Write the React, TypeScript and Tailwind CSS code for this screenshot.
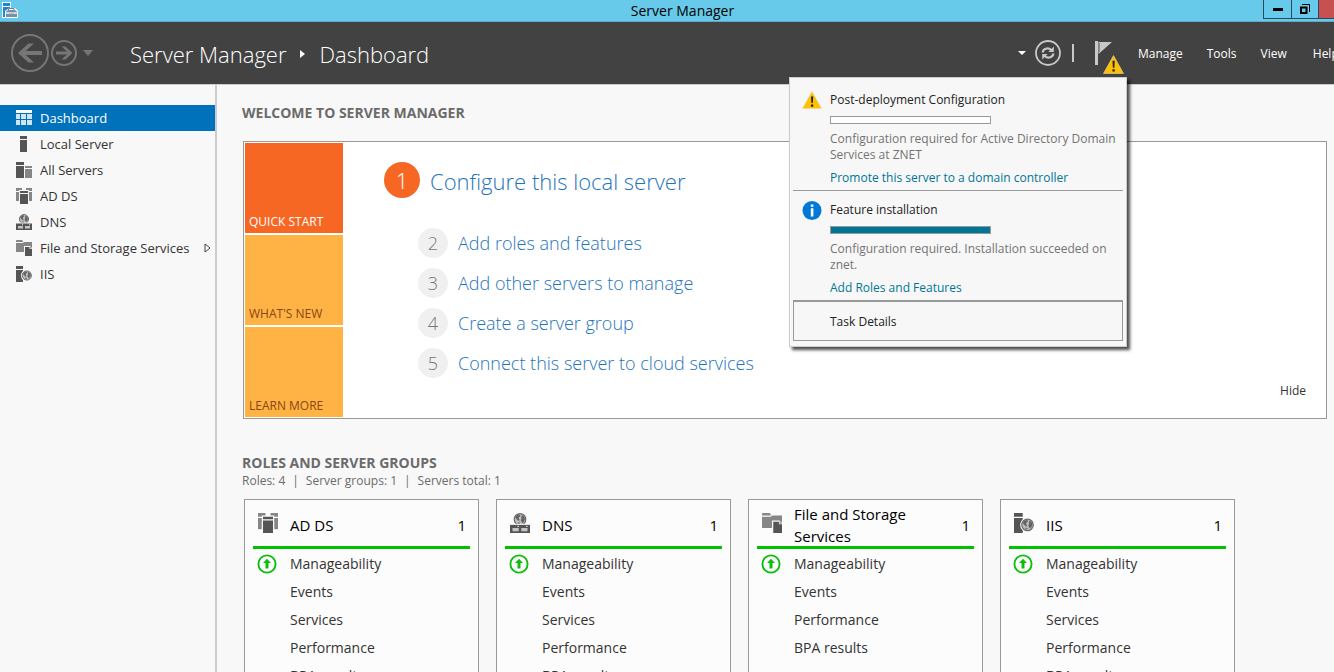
import React, { useState } from 'react';

type IconName = 'dashboard' | 'local' | 'all' | 'adds' | 'dns' | 'files' | 'iis';

const NAV: { label: string; icon: IconName; expandable?: boolean }[] = [
  { label: 'Dashboard', icon: 'dashboard' },
  { label: 'Local Server', icon: 'local' },
  { label: 'All Servers', icon: 'all' },
  { label: 'AD DS', icon: 'adds' },
  { label: 'DNS', icon: 'dns' },
  { label: 'File and Storage Services', icon: 'files', expandable: true },
  { label: 'IIS', icon: 'iis' },
];

const STEPS = [
  'Add roles and features',
  'Add other servers to manage',
  'Create a server group',
  'Connect this server to cloud services',
];

const ROLES: { name: string; icon: IconName; count: number; rows: string[] }[] = [
  { name: 'AD DS', icon: 'adds', count: 1, rows: ['Events', 'Services', 'Performance', 'BPA results'] },
  { name: 'DNS', icon: 'dns', count: 1, rows: ['Events', 'Services', 'Performance', 'BPA results'] },
  { name: 'File and Storage Services', icon: 'files', count: 1, rows: ['Events', 'Performance', 'BPA results'] },
  { name: 'IIS', icon: 'iis', count: 1, rows: ['Events', 'Services', 'Performance', 'BPA results'] },
];

function Globe({ cx, cy }: { cx: number; cy: number }) {
  return (
    <g transform={`translate(${cx} ${cy})`}>
      <circle r="5.9" fill="#f8f8f8" />
      <circle r="4.6" fill="#bcbcbc" stroke="#6e6e6e" strokeWidth="1" />
      <path d="M-3.8-1.8-2.2-3.6-.2-3.9.4-2.8-.8-2-1.2-.6-.2.2-.8 1.2-2 .4-3-.6Z" fill="#626262" />
      <path d="M1.6-3.4 3.2-2.4 4-.4 3.2 1.6 2 3 1.2 1.6.6.4 1.4-.8 1-2Z" fill="#626262" />
      <path d="M-1.6 2 .2 2.6-.4 3.9-1.8 3.4Z" fill="#777" />
    </g>
  );
}

function RoleIcon({ name, className }: { name: IconName; className: string }) {
  return (
    <svg viewBox="0 0 16 16" className={className} aria-hidden="true">
      {name === 'dashboard' && (
        <>
          <path d="M0 0h16v3H0z" fill="#fff" />
          <path d="M0 4h4v5H0zM0 10h4v5H0zM5 4h5v5H5zM11 4h5v5h-5zM5 10h5v5H5zM11 10h5v5h-5z" fill="#cfe5f5" />
        </>
      )}
      {name === 'local' && <path d="M4 0h7v3H4zM4 4h7v12H4z" fill="#555" />}
      {name === 'all' && (
        <>
          <path d="M0 0h8v3H0zM0 4h8v12H0z" fill="#555" />
          <path d="M9 4h7v2H9zM9 7h7v9H9z" fill="#868686" />
        </>
      )}
      {name === 'adds' && (
        <>
          <path d="M0 0h6v2H3v1H0zM0 4h3v9H0zM10 0h6v3h-3V2h-3zM13 4h3v9h-3z" fill="#868686" />
          <path d="M4 3h8v2H4zM4 6h8v10H4z" fill="#555" />
        </>
      )}
      {name === 'dns' && (
        <>
          <Globe cx={8} cy={5.1} />
          <path d="M0 8.6h16V16H0z" fill="#f8f8f8" />
          <path d="M0 9.5h16V16H0z" fill="#555" />
          <path d="M2 12h5v2.5H2zM9 12h5v2.5H9z" fill="#c4c4c4" />
          <path d="M6 10.2h1v1H6zM13 10.2h1v1h-1z" fill="#eee" />
        </>
      )}
      {name === 'files' && (
        <>
          <path d="M0 .5.5 0H6l1 1v1H0zM0 3h7l1-1h8v10H0z" fill="#868686" />
          <path d="M8 6h6l2.5 2.5V16H8z" fill="#f8f8f8" />
          <path d="M9 7h4.5v2H16v7H9z" fill="#555" />
          <path d="M14 6.5 16 8.5h-2z" fill="#868686" />
        </>
      )}
      {name === 'iis' && (
        <>
          <path d="M0 0h7v3H0zM0 4h7v12H0z" fill="#555" />
          <Globe cx={10.8} cy={9.5} />
        </>
      )}
    </svg>
  );
}

function WarningIcon({ className }: { className: string }) {
  return (
    <svg viewBox="0 0 20 18" className={className} aria-hidden="true">
      <path d="M10 .5 19.5 17.5H.5Z" fill="#ffc000" stroke="#e9d9a0" strokeWidth=".6" strokeLinejoin="round" />
      <path d="M9 5.5h2.2l-.4 6.500H9.4zM9 13.5h2.2v2.2H9z" fill="#222" />
    </svg>
  );
}

function UpIcon() {
  return (
    <svg viewBox="0 0 20 20" className="size-5" aria-hidden="true">
      <circle cx="10" cy="10" r="8.6" fill="#fff" stroke="#0abf0a" strokeWidth="1.9" />
      <path d="M10 4.8 14 9h-2.5v5.5h-3V9H6z" fill="#0abf0a" />
    </svg>
  );
}

function TitleBar() {
  return (
    <div className="flex h-[22px] shrink-0 items-start border-b border-[#5fa9c6] bg-[#67caea]">
      <div className="flex flex-1 items-center pl-0.5 pt-0.5">
        <svg viewBox="0 0 16 16" className="size-4" aria-hidden="true">
          <path d="M0 0h9v6h4l3 3v7H0z" fill="#fff" />
          <path d="M1 1h7v3H1zM1 5h7v1L5 7.500 3 9v6H1z" fill="#1c86d1" />
          <path d="M9 6H6.5v1.5h6V6z" fill="#fff" />
          <path d="M4 9.5 6 8h7l2 1.5V15H4z" fill="#7591a6" />
          <path d="M6.5 8V6.5h5.5V8" fill="none" stroke="#6a8598" />
          <path d="M4 11h11" stroke="#fff" />
          <path d="M6 10.5v1.5M13 10.5v1.5" stroke="#fff" />
        </svg>
      </div>
      <h1 className="text-[14px] leading-[21px] text-black">Server Manager</h1>
      <div className="flex flex-1 justify-end pr-[3px]">
        <button aria-label="Minimize" className="flex h-[19px] w-[29px] items-center justify-center border border-t-0 border-[#2b4a57]">
          <span className="h-[3px] w-[10px] bg-black" />
        </button>
        <button aria-label="Restore" className="flex h-[19px] w-[26px] items-center justify-center border-b border-[#2b4a57]">
          <svg viewBox="0 0 10 10" className="size-[10px]" aria-hidden="true">
            <path d="M2 .5h7.5V8" fill="none" stroke="#000" />
            <path d="M1 3.5h5.5V9H1z" fill="none" stroke="#000" strokeWidth="2" />
          </svg>
        </button>
        <button aria-label="Close" className="h-[19px] w-[45px] border border-t-0 border-[#2b4a57] bg-[#c75050]" />
      </div>
    </div>
  );
}

function Task({ icon, title, progress, text, link, id }: { icon: React.ReactNode; title: string; progress: number; text: string; link: string; id: string }) {
  return (
    <div className="flex gap-2 pb-1 pl-[9px] pr-1 pt-2.5">
      <div className="w-5 shrink-0">{icon}</div>
      <div className="text-[12px] leading-4">
        <h3 id={id} className="leading-[18px] text-[#222]">{title}</h3>
        <div
          role="progressbar"
          aria-labelledby={id}
          aria-valuenow={progress}
          className="mt-[7px] h-2 w-[161px] border border-[#999] bg-white"
        >
          <div className="h-full bg-[#007696]" style={{ width: `${progress}%` }} />
        </div>
        <p className="mt-[7px] text-[#747474]">{text}</p>
        <a href="#" className="mt-[7px] block text-[#007696]">{link}</a>
      </div>
    </div>
  );
}

function Notifications() {
  return (
    <div className="absolute right-[239px] top-[55px] z-10 w-[338px] border border-[#ccc] bg-[#f7f7f7] px-[3px] pb-[5px] pt-[3px] shadow-[3px_3px_3px_rgba(0,0,0,0.7)]">
      <Task
        id="task-deploy"
        icon={<WarningIcon className="h-[18px] w-5" />}
        title="Post-deployment Configuration"
        progress={0}
        text="Configuration required for Active Directory Domain Services at ZNET"
        link="Promote this server to a domain controller"
      />
      <div className="border-t border-[#999]" />
      <Task
        id="task-feature"
        icon={
          <svg viewBox="0 0 20 20" className="size-5" aria-hidden="true">
            <circle cx="10" cy="9.5" r="9.5" fill="#0078d7" />
            <path d="M8.8 3.500h2.600v2.300H8.8zM8.8 7.300h2.600v8.200H8.8z" fill="#fff" />
          </svg>
        }
        title="Feature installation"
        progress={100}
        text="Configuration required. Installation succeeded on znet."
        link="Add Roles and Features"
      />
      <button className="block h-[41px] w-full border border-t-2 border-[#999] pl-9 pt-px text-left text-[12px] text-[#222]">Task Details</button>
    </div>
  );
}

function Header({ open, onToggle }: { open: boolean; onToggle: () => void }) {
  return (
    <header className="relative flex h-[63px] shrink-0 items-center border-b border-[#ccc] bg-[#424242] pl-2.5 text-white">
      <button aria-label="Back" className="size-10">
        <svg viewBox="0 0 40 40" className="size-10" fill="none" stroke="#767676" aria-hidden="true">
          <circle cx="20" cy="20" r="18" strokeWidth="2" />
          <path d="M32 20H12" strokeWidth="4" />
          <path d="M24 10.5h-5.5L8 20l10.5 9.500H24L13.5 20Z" fill="#767676" stroke="none" />
        </svg>
      </button>
      <button aria-label="Forward" className="size-7">
        <svg viewBox="0 0 28 28" className="size-7" fill="none" stroke="#767676" aria-hidden="true">
          <circle cx="14" cy="14" r="12" strokeWidth="2" />
          <path d="M6 14h13" strokeWidth="3" />
          <path d="M11.5 7.5h4L22.5 14l-7 6.500h-4L18.5 14Z" fill="#767676" stroke="none" />
        </svg>
      </button>
      <button aria-label="History" className="flex w-5 justify-center">
        <svg viewBox="0 0 10 6" className="h-1.5 w-2.5" aria-hidden="true"><path d="M0 0h10L5 6Z" fill="#767676" /></svg>
      </button>
      <nav aria-label="Breadcrumb" className="flex items-center pl-8 pt-0.5 text-[22px] font-light leading-8">
        <a href="#">Server Manager</a>
        <svg viewBox="0 0 5 8" className="mx-3.5 h-2 w-[5px]" aria-hidden="true"><path d="M0 0 5 4 0 8Z" fill="#fff" /></svg>
        <a href="#">Dashboard</a>
      </nav>
      <div className="ml-auto flex items-center">
        <button aria-label="More" className="mr-[9px]">
          <svg viewBox="0 0 8 4" className="h-1 w-2" aria-hidden="true"><path d="M0 0h8L4 4Z" fill="#fff" /></svg>
        </button>
        <button aria-label="Refresh">
          <svg viewBox="0 0 26 26" className="size-[26px]" fill="none" stroke="#c8c8c8" aria-hidden="true">
            <circle cx="13" cy="13" r="12" strokeWidth="1.8" />
            <path d="M7.8 12.5c0-3.5 5-5.8 8.5-2.5M18.2 13.5c0 3.5-5 5.8-8.5 2.5" strokeWidth="2.2" />
            <path d="M18.8 6.5V12h-5.5ZM7.2 19.5V14h5.5Z" fill="#c8c8c8" stroke="none" />
          </svg>
        </button>
        <span className="ml-[11px] h-[18px] w-0.5 bg-[#c8c8c8]" />
        <button aria-label="Notifications" aria-expanded={open} onClick={onToggle} className="relative ml-[21px] h-7 w-[22px]">
          <svg viewBox="0 0 18 24" className="h-6 w-[18px]" aria-hidden="true">
            <path d="M0 0h3v24H0z" fill="#c8c8c8" />
            <path d="M3.5 1H17L3.5 13Z" fill="#c8c8c8" />
            <path d="M4.5 2v9" stroke="#8a8a8a" />
          </svg>
          <WarningIcon className="absolute left-2 top-4 h-[19px] w-[21px]" />
        </button>
        <nav className="ml-[21px] flex w-[228px] gap-6 whitespace-nowrap pt-0.5 text-[12px]">
          <button>Manage</button>
          <button>Tools</button>
          <button>View</button>
          <button className="pl-0.5">Help</button>
        </nav>
      </div>
      {open && <Notifications />}
    </header>
  );
}

function Sidebar({ active, onSelect }: { active: string; onSelect: (label: string) => void }) {
  return (
    <nav className="w-[217px] shrink-0 border-r-2 border-[#ccc] pt-5">
      {NAV.map((item) => (
        <button
          key={item.label}
          onClick={() => onSelect(item.label)}
          className={`flex h-[26px] w-full items-center pl-4 text-left text-[13px] ${item.label === active ? 'bg-[#0072bc] text-white' : 'text-[#333]'}`}
        >
          <RoleIcon name={item.icon} className="size-4" />
          <span className="ml-2 whitespace-nowrap pt-0.5">{item.label}</span>
          {item.expandable && (
            <svg viewBox="0 0 7 10" className="ml-auto mr-1 h-2.5 w-[7px]" aria-hidden="true">
              <path d="M1 1v8l5-4Z" fill="none" stroke="#444" />
            </svg>
          )}
        </button>
      ))}
    </nav>
  );
}

function Welcome() {
  return (
    <section>
      <h2 className="text-[14px] font-bold leading-5 text-[#6b6b6b]">WELCOME TO SERVER MANAGER</h2>
      <div className="relative ml-px mt-[18px] flex border border-[#999] bg-white p-px">
        <div className="flex w-[98px] shrink-0 flex-col gap-0.5 text-[12px]">
          <button className="flex h-[90px] items-end bg-[#f56723] px-1 pb-0.5 text-white">QUICK START</button>
          <button className="flex h-[90px] items-end bg-[#ffb344] px-1 pb-0.5 text-[#8a4513]">WHAT'S NEW</button>
          <button className="flex h-[90px] items-end bg-[#ffb344] px-1 pb-0.5 text-[#8a4513]">LEARN MORE</button>
        </div>
        <div className="pl-[41px] pt-[19px] text-[#1f74bb]">
          <a href="#" className="flex items-center gap-2.5 text-[22px] font-light">
            <span className="flex size-9 items-center justify-center rounded-full bg-[#f56723] text-white">1</span>
            <span className="pt-0.5">Configure this local server</span>
          </a>
          <ol className="mt-[30px] flex flex-col gap-2.5 pl-[34px]">
            {STEPS.map((step, i) => (
              <li key={step}>
                <a href="#" className="flex items-center gap-2.5 text-[18px] font-light">
                  <span className="flex size-[30px] items-center justify-center rounded-full bg-[#f0f0f0] text-[#777]">{i + 2}</span>
                  {step}
                </a>
              </li>
            ))}
          </ol>
        </div>
        <button className="absolute bottom-[18px] right-5 text-[12px] leading-[18px] text-[#333]">Hide</button>
      </div>
    </section>
  );
}

function RoleCard({ role }: { role: (typeof ROLES)[number] }) {
  return (
    <article className="w-[235px] shrink-0 border border-[#999] bg-[#fcfcfc] px-2 pb-4">
      <div className="flex h-[49px] items-center border-b-3 border-[#00c000] pl-[5px] pr-1 text-[15px] leading-[22px] text-black">
        <RoleIcon name={role.icon} className="size-5 shrink-0" />
        <h3 className="ml-3 flex-1 pt-1">{role.name}</h3>
        <span className="w-8 pt-1 text-right">{role.count}</span>
      </div>
      <ul className="pt-px text-[14px] leading-7 text-[#333]">
        <li className="flex items-center px-1">
          <UpIcon />
          <a href="#" className="ml-[13px]">Manageability</a>
        </li>
        {role.rows.map((row) => (
          <li key={row} className="pl-[37px]"><a href="#">{row}</a></li>
        ))}
      </ul>
    </article>
  );
}

export default function App() {
  const [active, setActive] = useState('Dashboard');
  const [open, setOpen] = useState(true);

  return (
    <div className="h-screen overflow-hidden bg-[#f8f8f8] font-['Open_Sans','Noto_Sans',sans-serif]">
      {/* the window reaches past the right edge of small screens */}
      <div className="flex h-full min-w-[1366px] flex-col">
        <TitleBar />
        <Header open={open} onToggle={() => setOpen(!open)} />
        <div className="flex min-h-0 flex-1">
          <Sidebar active={active} onSelect={setActive} />
          <main className="min-w-0 flex-1 overflow-hidden pl-[25px] pr-[39px] pt-[18px]">
            <Welcome />
            <section className="mt-[34px]">
              <h2 className="text-[14px] font-bold leading-5 text-[#6b6b6b]">ROLES AND SERVER GROUPS</h2>
              <div className="flex gap-[7px] text-[12px] leading-4 text-[#6b6b6b]">
                <span>Roles: 4</span>
                <span>|</span>
                <span>Server groups: 1</span>
                <span>|</span>
                <span>Servers total: 1</span>
              </div>
              <div className="ml-0.5 mt-2.5 flex gap-[17px]">
                {ROLES.map((role) => (
                  <RoleCard key={role.name} role={role} />
                ))}
              </div>
            </section>
          </main>
        </div>
      </div>
    </div>
  );
}
